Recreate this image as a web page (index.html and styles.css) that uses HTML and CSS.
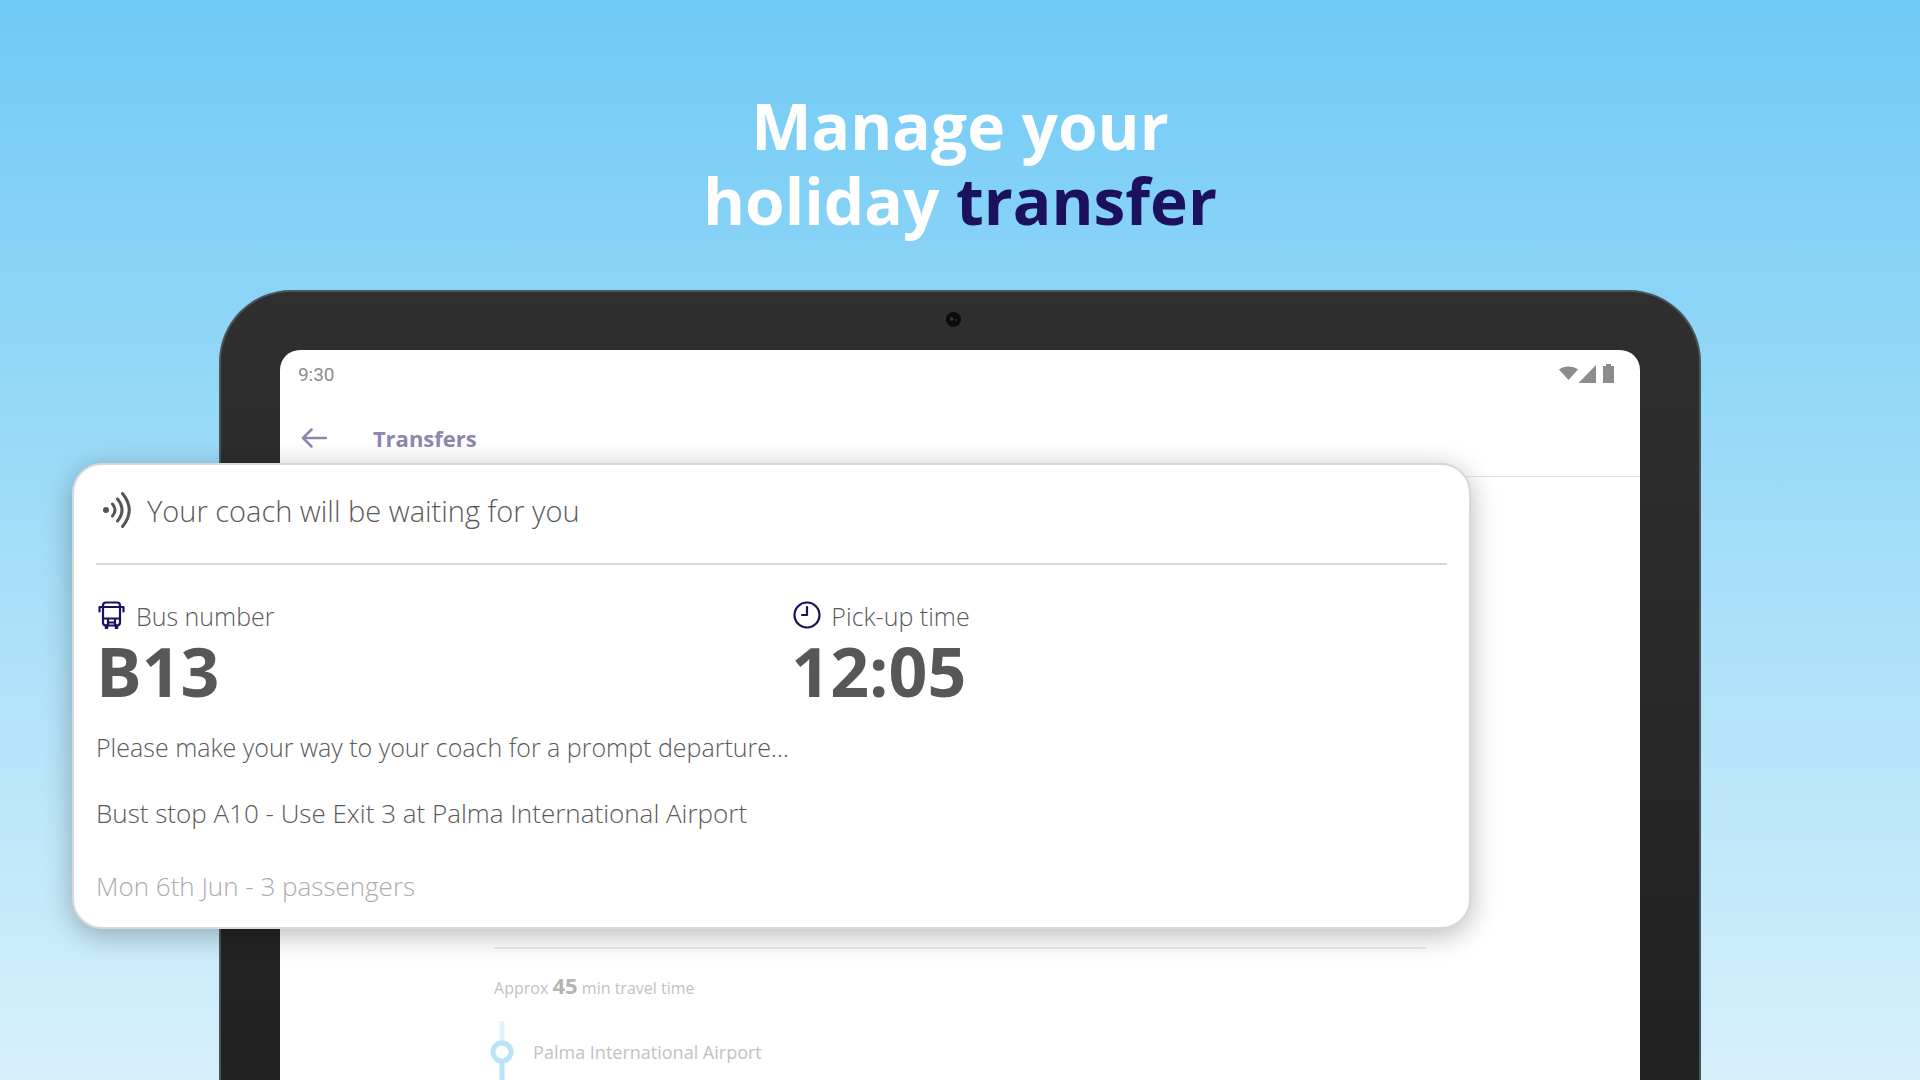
FILE: index.html
```html
<!DOCTYPE html>
<html lang="en">
<head>
    <meta charset="utf-8">
    <title>Manage your holiday transfer</title>
    <link rel="stylesheet" href="styles.css">
</head>
<body>
    <h1 class="headline">Manage your<br>holiday <span class="accent">transfer</span></h1>

    <main class="stage">
        <div class="tablet">
            <div class="bezel">
                <svg class="camera" viewBox="0 0 15 15">
                    <circle cx="7.500" cy="7.500" r="7.500" fill="#0b0b0c"/>
                    <circle cx="5.500" cy="7" r="1.800" fill="#34383c"/>
                    <circle cx="10" cy="8" r="1.200" fill="#24272a"/>
                </svg>
            </div>
            <div class="screen">
                <div class="status-bar">
                    <span>9:30</span>
                    <svg class="status-icons" viewBox="0 0 57 20">
                        <path d="M0 5.500C5 1.500 14 1.500 19 5.500L9.500 16z"/>
                        <path d="M37 1v18H19.500z"/>
                        <path d="M44 2h3V0h5v2h3v17H44z"/>
                    </svg>
                </div>
                <header class="app-bar">
                    <button class="back" aria-label="Back">
                        <svg viewBox="0 0 26 20">
                            <path d="M25 10H2M10.500 1.500L2 10l8.500 8.500"/>
                        </svg>
                    </button>
                    <h2>Transfers</h2>
                </header>
                <section class="journey">
                    <p class="travel-time">Approx <b>45</b> min travel time</p>
                    <div class="stop">
                        <svg class="marker" viewBox="0 0 24 60">
                            <path d="M12 0v20" stroke="#dff2fd"/>
                            <path d="M12 42v18" stroke="#b9e4f8"/>
                            <circle cx="12" cy="31" r="9" stroke="#b9e4f8"/>
                        </svg>
                        <span>Palma International Airport</span>
                    </div>
                </section>
            </div>
        </div>

        <article class="card">
            <header class="card-header">
                <svg class="signal" viewBox="0 0 28 36">
                    <circle cx="3" cy="18" r="3"/>
                    <path d="M9.500 12Q14.500 18 9.500 24M14.500 7Q23.500 18 14.500 29M19.500 1.500Q33 18 19.500 34.500"/>
                </svg>
                <span>Your coach will be waiting for you</span>
            </header>
            <div class="details">
                <div>
                    <div class="label">
                        <svg class="icon" viewBox="0 0 28 28">
                            <rect x="5" y="1.500" width="17" height="23" rx="3"/>
                            <path d="M5 6h17M5 17.500h17M5 6H1.500v4.500M22 6h3.500v4.500M10 18v6.500M17 18v6.500M10 21.500h7"/>
                            <path d="M8.500 25v2M18.500 25v2" stroke-width="3.500"/>
                        </svg>
                        <span>Bus number</span>
                    </div>
                    <div class="value">B13</div>
                </div>
                <div>
                    <div class="label">
                        <svg class="icon" viewBox="0 0 28 28">
                            <circle cx="14" cy="14" r="12.500"/>
                            <path d="M14 6v8H9"/>
                        </svg>
                        <span>Pick-up time</span>
                    </div>
                    <div class="value">12:05</div>
                </div>
            </div>
            <p>Please make your way to your coach for a prompt departure...</p>
            <p class="location">Bust stop A10 - Use Exit 3 at Palma International Airport</p>
            <p class="summary">Mon 6th Jun - 3 passengers</p>
        </article>
    </main>
</body>
</html>
```
FILE: styles.css
```css
* {
    box-sizing: border-box;
}

body {
    margin: 0;
    height: 100vh;
    overflow: hidden;
    display: flex;
    flex-direction: column;
    font-family: "Open Sans", sans-serif;
    font-weight: 300;
    color: #5a5a5a;
    background: linear-gradient(#70caf5, #d6f0fb);
}

h1, h2, p {
    margin: 0;
}

svg {
    display: block;
    flex: none;
}

.headline {
    padding: 88px 0 52px;
    font-size: 64px;
    font-weight: 700;
    line-height: 75px;
    text-align: center;
    color: #fff;
}

.accent {
    color: #1b115c;
}

.stage {
    position: relative;
    flex: 1;
}

/* tablet */
.tablet {
    display: flex;
    flex-direction: column;
    width: 77.2%;
    min-height: 100%;
    margin: 0 auto;
    padding: 0 59px;
    border: 2px solid #47565e;
    border-bottom: 0;
    border-radius: 72px 72px 0 0;
    background: linear-gradient(#2f2f2f, #212121);
}

.bezel {
    display: flex;
    align-items: center;
    justify-content: center;
    height: 58px;
    padding: 0 12px 4px 0;
}

.camera {
    width: 15px;
    height: 15px;
}

.screen {
    flex: 1;
    border-radius: 20px 20px 0 0;
    background: #fff;
}

.status-bar {
    display: flex;
    align-items: center;
    justify-content: space-between;
    height: 48px;
    padding: 0 24px 0 18px;
    font-family: Roboto, sans-serif;
    font-size: 19px;
    font-weight: 400;
    color: #8c8c8c;
}

.status-icons {
    width: 57px;
    height: 20px;
    fill: #8c8c8c;
}

.app-bar {
    display: flex;
    align-items: center;
    gap: 46px;
    height: 79px;
    padding: 2px 0 0 21px;
    border-bottom: 1px solid #e4e4e4;
    color: #8d87ad;
}

.app-bar h2 {
    font-size: 22px;
    font-weight: 700;
}

.back {
    padding: 0;
    border: 0;
    background: none;
    color: inherit;
}

.back svg {
    width: 26px;
    height: 20px;
    fill: none;
    stroke: currentColor;
    stroke-width: 2.5;
    stroke-linecap: round;
    stroke-linejoin: round;
}

.journey {
    width: 68.5%;
    margin: 470px auto 0;
    border-top: 2px solid #ebebeb;
    font-size: 18px;
    line-height: 32px;
    font-weight: 400;
    color: #c2c2c2;
}

.travel-time {
    padding: 20px 0 17px;
    font-size: 16px;
}

.travel-time b {
    font-size: 22px;
    color: #b5b5b5;
}

.stop {
    display: flex;
    gap: 19px;
    line-height: 62px;
}

.marker {
    width: 24px;
    height: 60px;
    margin-left: -4px;
    fill: none;
    stroke-width: 5;
}

/* card over the tablet */
.card {
    position: absolute;
    top: 173px;
    left: 3.75%;
    right: 23.4%;
    padding: 0 22px 23px;
    border: 2px solid #d6d8d9;
    border-radius: 30px;
    background: #fff;
    box-shadow: 0 6px 28px rgba(0, 0, 0, 0.28);
    font-size: 25px;
    line-height: 36px;
}

.card-header {
    display: flex;
    align-items: center;
    gap: 16px;
    height: 100px;
    padding: 0 0 6px 7px;
    border-bottom: 2px solid #d6d8d9;
    font-size: 29px;
}

.signal {
    width: 28px;
    height: 36px;
    margin-top: -2px;
    fill: #555;
}

.signal path {
    fill: none;
    stroke: #555;
    stroke-width: 3;
    stroke-linecap: round;
}

.details {
    display: grid;
    grid-template-columns: 1fr 1fr;
    gap: 40px;
    padding: 35px 0 19px;
}

.label {
    display: flex;
    align-items: center;
    gap: 10px;
    line-height: 32px;
}

.icon {
    width: 28px;
    height: 28px;
    margin: -2px 0 0 2px;
    fill: none;
    stroke: #1b115c;
    stroke-width: 2.2;
    stroke-linecap: round;
    stroke-linejoin: round;
}

.value {
    font-size: 68px;
    font-weight: 700;
    line-height: 78px;
    color: #575757;
}

.location,
.summary {
    font-size: 26px;
}

.location {
    margin: 30px 0 37px;
}

.summary {
    color: #acacac;
}
```
